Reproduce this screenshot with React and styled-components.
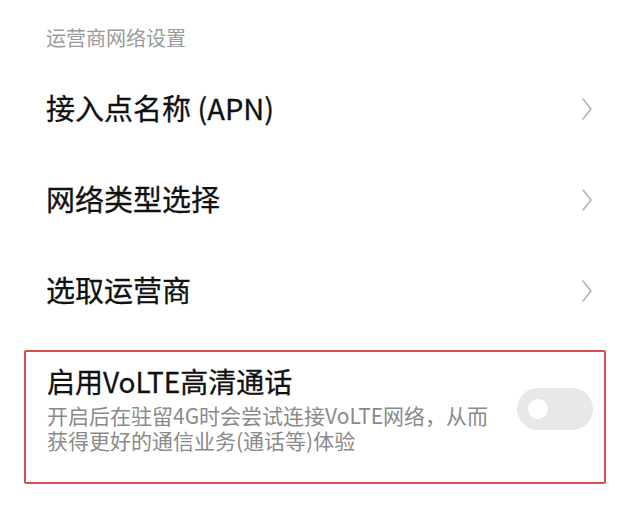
import React from "react";
import styled, { createGlobalStyle } from "styled-components";

const GlobalStyle = createGlobalStyle`
  html, body {
    margin: 0;
    padding: 0;
    background: #fff;
  }
  body {
    font-family: "Noto Sans CJK SC", "Noto Sans", sans-serif;
  }
`;

const rows = ["接入点名称 (APN)", "网络类型选择", "选取运营商"];

const Chevron = () => (
  <svg width="12" height="24" viewBox="0 0 12 24">
    <polyline
      points="2,2 10,12 2,22"
      fill="none"
      stroke="#b4b4b4"
      strokeWidth="1.6"
      strokeLinecap="round"
      strokeLinejoin="round"
    />
  </svg>
);

export default function App() {
  return (
    <>
      <GlobalStyle />
      <Page>
        <SectionTitle>运营商网络设置</SectionTitle>
        <List>
          {rows.map((label) => (
            <Row key={label}>
              <RowLabel>{label}</RowLabel>
              <Chevron />
            </Row>
          ))}
        </List>
        <Highlight>
          <TextBlock>
            <ItemTitle>启用VoLTE高清通话</ItemTitle>
            <ItemDesc>
              开启后在驻留4G时会尝试连接VoLTE网络，从而获得更好的通信业务(通话等)体验
            </ItemDesc>
          </TextBlock>
          <Toggle>
            <Knob />
          </Toggle>
        </Highlight>
      </Page>
    </>
  );
}

const Page = styled.div`
  width: 640px;
  height: 524px;
  background: #fff;
  overflow: hidden;
`;

const SectionTitle = styled.div`
  padding: 24px 0 9px 46px;
  font-size: 20px;
  line-height: 28px;
  color: #9a9a9a;
`;

const List = styled.div`
  display: flex;
  flex-direction: column;
`;

const Row = styled.div`
  height: 91px;
  display: flex;
  align-items: center;
  justify-content: space-between;
  padding: 0 47px 0 46px;

  svg {
    margin-top: 4px;
  }
`;

const RowLabel = styled.span`
  font-size: 29px;
  color: #111;
  -webkit-text-stroke: 0.3px #111;
`;

const Highlight = styled.div`
  margin: 16px 34px 0 24px;
  height: 134px;
  box-sizing: border-box;
  border: 2px solid #d6514b;
  border-radius: 2px;
  display: flex;
  align-items: center;
  padding: 0 11px 16px 21px;
`;

const TextBlock = styled.div`
  flex: 1;
  display: flex;
  flex-direction: column;
  gap: 6px;
`;

const ItemTitle = styled.div`
  font-size: 28px;
  line-height: 32px;
  color: #111;
  -webkit-text-stroke: 0.3px #111;
`;

const ItemDesc = styled.div`
  width: 460px;
  font-size: 21px;
  line-height: 25px;
  color: #8a8a8a;
`;

const Toggle = styled.div`
  width: 76px;
  height: 42px;
  border-radius: 21px;
  background: #e8e8e8;
  display: flex;
  align-items: center;
  padding-left: 11px;
  box-sizing: border-box;
`;

const Knob = styled.div`
  width: 20px;
  height: 20px;
  border-radius: 50%;
  background: #fff;
`;
